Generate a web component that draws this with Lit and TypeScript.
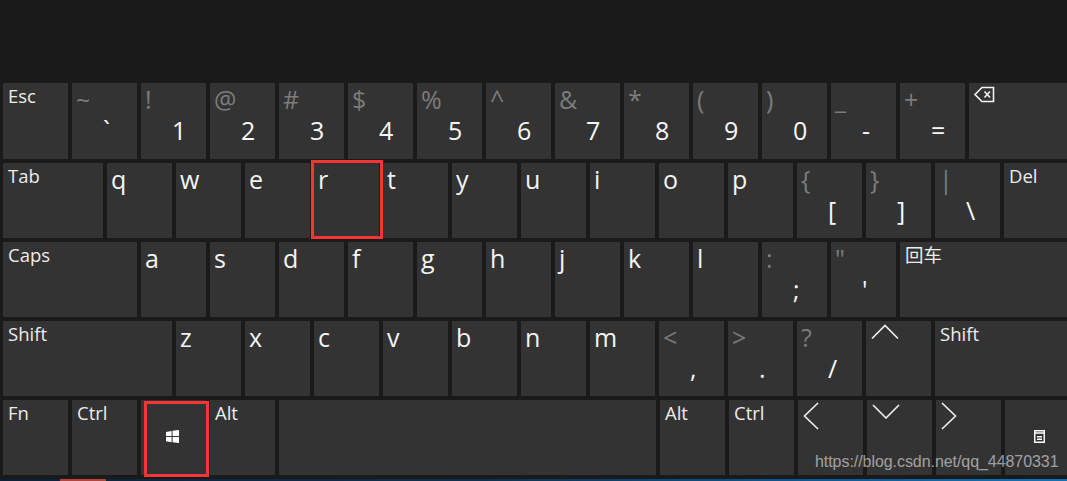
import { LitElement, html, css, svg, nothing } from 'lit';
import { customElement } from 'lit/decorators.js';
import { classMap } from 'lit/directives/class-map.js';

type KeyDef = {
  label?: string; // word keys: Esc, Tab...
  top?: string; // grey shifted symbol
  main?: string; // white symbol
  letter?: string;
  icon?: string;
  w?: string; // width class
  mark?: 'r' | 'win';
};

const icons: Record<string, unknown> = {
  back: svg`<path d="M1 8.5 8 1.5H19.5V15.5H8Z" fill="none" stroke="#f2f2f2" stroke-width="1.6"/><path d="M10.5 5.5 16 11.5M16 5.5 10.5 11.5" fill="none" stroke="#f2f2f2" stroke-width="1.6"/>`,
  win: svg`<path d="M0 2 5.6.9V6.1H0ZM6.6.8 13 0V6.1H6.6ZM0 7.1H5.6V12.2L0 11.2ZM6.6 7.1H13V13L6.6 12.3Z" fill="#fff"/>`,
  up: svg`<path d="M1 14.5 14 1.5 27 14.5" fill="none" stroke="#f0f0f0" stroke-width="1.6"/>`,
  down: svg`<path d="M1 1 14 14 27 1" fill="none" stroke="#f0f0f0" stroke-width="1.6"/>`,
  left: svg`<path d="M15 1 1.5 14 15 27" fill="none" stroke="#f0f0f0" stroke-width="1.6"/>`,
  right: svg`<path d="M1 1 14.5 14 1 27" fill="none" stroke="#f0f0f0" stroke-width="1.6"/>`,
  menu: svg`<path d="M.75.75H10.25V12.25H.75ZM1 3H10M3 6.75H8M3 9.25H8" fill="none" stroke="#fff" stroke-width="1.4"/>`,
};

const pair = (top: string, main: string): KeyDef => ({ top, main });
const letters = (s: string): KeyDef[] => s.split('').map((letter) => ({ letter }));

const rows: { cls: string; keys: KeyDef[] }[] = [
  {
    cls: 'first',
    keys: [
      { label: 'Esc' },
      pair('~', '`'),
      pair('!', '1'),
      pair('@', '2'),
      pair('#', '3'),
      pair('$', '4'),
      pair('%', '5'),
      pair('^', '6'),
      pair('&', '7'),
      pair('*', '8'),
      pair('(', '9'),
      pair(')', '0'),
      pair('_', '-'),
      pair('+', '='),
      { icon: 'back', w: 'fill' },
    ],
  },
  {
    cls: '',
    keys: [
      { label: 'Tab', w: 'w100' },
      { letter: 'q' },
      { letter: 'w' },
      { letter: 'e' },
      { letter: 'r', mark: 'r' },
      ...letters('tyuiop'),
      pair('{', '['),
      pair('}', ']'),
      pair('|', '\\'),
      { label: 'Del', w: 'fill' },
    ],
  },
  {
    cls: '',
    keys: [
      { label: 'Caps', w: 'w134' },
      ...letters('asdfghjkl'),
      pair(':', ';'),
      pair('"', "'"),
      { label: '回车', w: 'fill' },
    ],
  },
  {
    cls: '',
    keys: [
      { label: 'Shift', w: 'w169' },
      ...letters('zxcvbnm'),
      pair('<', ','),
      pair('>', '.'),
      pair('?', '/'),
      { icon: 'up' },
      { label: 'Shift', w: 'fill' },
    ],
  },
  {
    cls: '',
    keys: [
      { label: 'Fn' },
      { label: 'Ctrl' },
      { icon: 'win', mark: 'win' },
      { label: 'Alt' },
      { w: 'space' },
      { label: 'Alt' },
      { label: 'Ctrl' },
      { icon: 'left' },
      { icon: 'down' },
      { icon: 'right' },
      { icon: 'menu', w: 'fill' },
    ],
  },
];

@customElement('app-root')
export class AppRoot extends LitElement {
  static styles = css`
    :host {
      display: block;
      position: relative;
      width: 1067px;
      height: 481px;
      overflow: hidden;
      background: #1a1a1a;
      font-family: 'Open Sans', 'Noto Sans CJK SC', sans-serif;
      color: #f2f2f2;
    }
    .board {
      display: flex;
      flex-direction: column;
      gap: 4px;
      padding: 83px 0 0 3px;
      box-sizing: border-box;
    }
    .row {
      display: flex;
      flex: 0 0 75px;
      gap: 4px;
    }
    .row.first {
      flex-basis: 76px;
    }
    .key {
      position: relative;
      flex: 0 0 65px;
      background: #333333;
      box-sizing: border-box;
    }
    .key.w100 { flex-basis: 100px; }
    .key.w134 { flex-basis: 134px; }
    .key.w169 { flex-basis: 169px; }
    .key.space { flex-basis: 377px; }
    .key.fill { flex: 1 1 0; }
    .label {
      padding: 1px 0 0 5px;
      font-size: 18.5px;
      line-height: 24px;
      color: #ececec;
    }
    .letter {
      padding: 0 0 0 4px;
      font-size: 25px;
      line-height: 32px;
      color: #f4f4f4;
    }
    .top {
      padding: 0 0 0 4px;
      font-size: 25px;
      line-height: 32px;
      height: 31px;
      color: #7c7c7c;
    }
    .main {
      padding: 0 0 0 31px;
      font-size: 25px;
      line-height: 32px;
      color: #f8f8f8;
    }
    .icon {
      display: block;
    }
    .ico-back { margin: 3px 0 0 5px; }
    .ico-win { margin: 30px 0 0 25px; }
    .ico-up { margin: 3px 0 0 5px; }
    .ico-down { margin: 4px 0 0 5px; }
    .ico-left { margin: 2px 0 0 5px; }
    .ico-right { margin: 2px 0 0 5px; }
    .ico-menu { margin: 30px 0 0 29px; }
    .mark {
      position: absolute;
      border: 3px solid #f83535;
      box-sizing: border-box;
      pointer-events: none;
    }
    .mark.r {
      left: -3px;
      right: -4px;
      top: -3px;
      bottom: -1px;
    }
    .mark.win {
      left: 3px;
      right: -3px;
      top: 1px;
      bottom: -2px;
    }
    .watermark {
      position: absolute;
      left: 815px;
      top: 452px;
      font-family: 'Liberation Sans', Arial, sans-serif;
      font-size: 16px;
      letter-spacing: -0.06px;
      line-height: 20px;
      color: rgba(255, 255, 255, 0.55);
      white-space: nowrap;
    }
    .strip {
      position: absolute;
      left: 0;
      right: 0;
      bottom: 0;
      height: 2px;
      background: linear-gradient(90deg, #0c2138 0%, #0e3050 45%, #0e5d9c 80%, #1272b8 100%);
    }
    .strip i {
      position: absolute;
      left: 60px;
      width: 46px;
      top: 0;
      bottom: 0;
      background: #b5443a;
    }
  `;

  private iconSize(name: string) {
    const sizes: Record<string, [number, number]> = {
      back: [21, 17],
      win: [13, 13],
      up: [28, 16],
      down: [28, 15],
      left: [16, 28],
      right: [16, 28],
      menu: [11, 13],
    };
    return sizes[name];
  }

  private renderKey(k: KeyDef) {
    const cls: Record<string, boolean> = { key: true };
    if (k.w) cls[k.w] = true;
    let size = k.icon ? this.iconSize(k.icon) : null;
    return html`<div class=${classMap(cls)}>
      ${k.label ? html`<div class="label">${k.label}</div>` : nothing}
      ${k.letter ? html`<div class="letter">${k.letter}</div>` : nothing}
      ${k.top ? html`<div class="top">${k.top}</div><div class="main">${k.main}</div>` : nothing}
      ${k.icon && size
        ? html`<svg class="icon ico-${k.icon}" width=${size[0]} height=${size[1]} viewBox="0 0 ${size[0]} ${size[1]}">${icons[k.icon]}</svg>`
        : nothing}
      ${k.mark ? html`<div class="mark ${k.mark}"></div>` : nothing}
    </div>`;
  }

  render() {
    return html`
      <div class="board">
        ${rows.map((r) => html`<div class="row ${r.cls}">${r.keys.map((k) => this.renderKey(k))}</div>`)}
      </div>
      <div class="watermark">https://blog.csdn.net/qq_44870331</div>
      <div class="strip"><i></i></div>
    `;
  }
}
